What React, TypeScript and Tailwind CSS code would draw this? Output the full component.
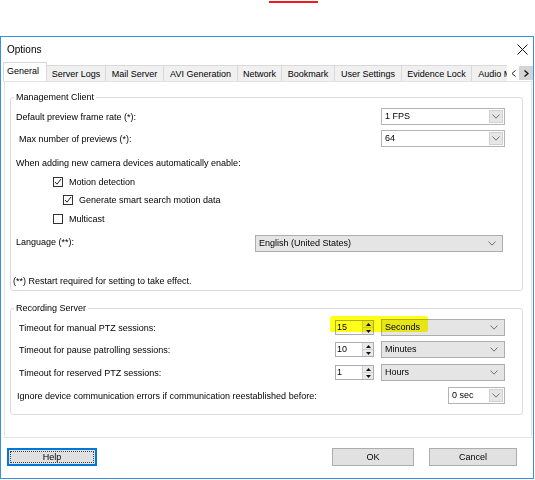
import React from "react";

const Chevron = () => (
  <svg width="8" height="5" viewBox="0 0 8 5" className="block">
    <polyline points="0.5,0.5 4,4.2 7.5,0.5" fill="none" stroke="#707070" strokeWidth="1" />
  </svg>
);

function WhiteSelect({ value, className }: { value: string; className: string }) {
  return (
    <div className={`flex h-[17px] border border-[#b4b4b4] bg-white ${className}`}>
      <span className="flex-1 pl-[3px] leading-[15px]">{value}</span>
      <div className="m-[1px] flex w-[14px] items-center justify-center border border-[#cfcfcf] bg-[#e6e6e6]">
        <Chevron />
      </div>
    </div>
  );
}

function GraySelect({ value, className }: { value: string; className: string }) {
  return (
    <div className={`flex h-[17px] items-center justify-between border border-[#adadad] bg-[#e5e5e5] pl-[3px] pr-[6px] ${className}`}>
      <span className="leading-[15px]">{value}</span>
      <Chevron />
    </div>
  );
}

function Spinner({ value }: { value: string }) {
  return (
    <div className="flex h-[15px] w-[39px] border border-[#abadb3] bg-white">
      <span className="flex-1 pl-[1px] leading-[13px]">{value}</span>
      <div className="flex w-[11px] flex-col border-l border-[#d0d0d0] bg-[#eaeaea]">
        <div className="flex flex-1 items-center justify-center border-b border-[#cfcfcf]">
          <svg width="5" height="3" viewBox="0 0 5 3"><polygon points="0,3 5,3 2.5,0" fill="#111" /></svg>
        </div>
        <div className="flex flex-1 items-center justify-center">
          <svg width="5" height="3" viewBox="0 0 5 3"><polygon points="0,0 5,0 2.5,3" fill="#111" /></svg>
        </div>
      </div>
    </div>
  );
}

function Check({ checked }: { checked: boolean }) {
  return (
    <div className="flex h-[10px] w-[10px] items-center justify-center border border-[#333] bg-white">
      {checked && (
        <svg width="8" height="8" viewBox="0 0 8 8">
          <polyline points="1,4 3,6.2 7,1" fill="none" stroke="#222" strokeWidth="1" />
        </svg>
      )}
    </div>
  );
}

const tabs: { label: string; w: string }[] = [
  { label: "Server Logs", w: "w-[59px]" },
  { label: "Mail Server", w: "w-[58px]" },
  { label: "AVI Generation", w: "w-[74px]" },
  { label: "Network", w: "w-[44px]" },
  { label: "Bookmark", w: "w-[53px]" },
  { label: "User Settings", w: "w-[67px]" },
  { label: "Evidence Lock", w: "w-[70px]" },
  { label: "Audio Messages", w: "w-[80px]" },
];

function SpinRow({ label, value, unit }: { label: string; value: string; unit: string }) {
  return (
    <div className="flex h-[17px] items-center justify-between pr-[12px]">
      <span className="pl-[3px]">{label}</span>
      <div className="flex items-center gap-[7px]">
        <Spinner value={value} />
        <GraySelect value={unit} className="w-[124px]" />
      </div>
    </div>
  );
}

export default function App() {
  return (
    <div className="relative h-[480px] w-[535px] overflow-hidden bg-white font-['Liberation_Sans',Arial,sans-serif] text-[9px] leading-[12px] text-black">
      <div className="h-[35px]">
        <div className="ml-[269px] mt-[1px] h-[2px] w-[49px] bg-[#ec1c24]" />
      </div>
      <div className="flex h-[443px] w-[534px] flex-col border border-[#3c8ee3] bg-white">
        {/* title bar */}
        <div className="flex h-[25px] items-center justify-between pl-[6px] pr-[5px]">
          <span className="text-[10px]">Options</span>
          <svg width="11" height="11" viewBox="0 0 11 11">
            <path d="M0.5 0.5 L10.5 10.5 M10.5 0.5 L0.5 10.5" stroke="#111" strokeWidth="1" />
          </svg>
        </div>
        {/* tab strip */}
        <div className="relative z-10 flex h-[19px] items-end">
          <div className="ml-[2px] flex w-[504px] items-end overflow-hidden">
            <div className="mb-[-1px] h-[20px] w-[44px] shrink-0 border-x border-t border-[#d9d9d9] bg-white pl-[3px] leading-[17px]">
              General
            </div>
            {tabs.map((t) => (
              <div
                key={t.label}
                className={`flex h-[16px] shrink-0 items-center justify-center whitespace-nowrap border-r border-t border-[#d9d9d9] bg-[#f0f0f0] ${t.w}`}
              >
                {t.label}
              </div>
            ))}
          </div>
          <div className="flex h-[16px] items-center">
            <div className="flex h-[14px] w-[12px] items-center justify-center">
              <svg width="5" height="7" viewBox="0 0 5 7"><polyline points="4.5,0.5 1,3.5 4.5,6.5" fill="none" stroke="#222" strokeWidth="1" /></svg>
            </div>
            <div className="flex h-[14px] w-[14px] items-center justify-center bg-[#d4d4d4]">
              <svg width="5" height="7" viewBox="0 0 5 7"><polyline points="0.5,0.5 4,3.5 0.5,6.5" fill="none" stroke="#111" strokeWidth="1.3" /></svg>
            </div>
          </div>
        </div>
        {/* tab panel */}
        <div className="ml-[3px] h-[357px] w-[528px] border border-[#e3e3e3] bg-white">
          <fieldset className="ml-[5px] mt-[9px] w-[513px] rounded-[3px] border border-[#dcdcdc] px-[5px] pb-[3px]">
            <legend className="ml-[-2px] px-[2px] leading-[12px]">Management Client</legend>
            <div className="mt-[5px] flex h-[17px] items-center justify-between pr-[12px]">
              <span>Default preview frame rate (*):</span>
              <WhiteSelect value="1 FPS" className="w-[124px]" />
            </div>
            <div className="mt-[5px] flex h-[17px] items-center justify-between pr-[12px]">
              <span className="pl-[3px]">Max number of previews (*):</span>
              <WhiteSelect value="64" className="w-[124px]" />
            </div>
            <div className="mt-[10px] h-[12px]">When adding new camera devices automatically enable:</div>
            <div className="ml-[37px] mt-[7px] flex h-[12px] items-center gap-[6px]">
              <Check checked />
              <span>Motion detection</span>
            </div>
            <div className="ml-[47px] mt-[6px] flex h-[12px] items-center gap-[6px]">
              <Check checked />
              <span>Generate smart search motion data</span>
            </div>
            <div className="ml-[37px] mt-[7px] flex h-[12px] items-center gap-[6px]">
              <Check checked={false} />
              <span>Multicast</span>
            </div>
            <div className="mt-[10px] flex h-[17px] items-center justify-between pr-[14px]">
              <span className="mb-[4px]">Language (**):</span>
              <GraySelect value="English (United States)" className="w-[248px]" />
            </div>
            <div className="mt-[23px] h-[12px] ml-[-3px]">(**) Restart required for setting to take effect.</div>
          </fieldset>

          <fieldset className="ml-[5px] mt-[11px] w-[513px] rounded-[3px] border border-[#dcdcdc] px-[5px] pb-[10px]">
            <legend className="ml-[-2px] px-[2px] leading-[12px]">Recording Server</legend>
            <div className="mt-[5px]">
              <SpinRow label="Timeout for manual PTZ sessions:" value="15" unit="Seconds" />
            </div>
            <div className="mt-[5px]">
              <SpinRow label="Timeout for pause patrolling sessions:" value="10" unit="Minutes" />
            </div>
            <div className="mt-[6px]">
              <SpinRow label="Timeout for reserved PTZ sessions:" value="1" unit="Hours" />
            </div>
            <div className="mt-[6px] flex h-[17px] items-center justify-between pr-[12px]">
              <span className="pl-[1px]">Ignore device communication errors if communication reestablished before:</span>
              <WhiteSelect value="0 sec" className="w-[57px]" />
            </div>
          </fieldset>
        </div>
        {/* footer */}
        <div className="mt-[10px] flex items-center pr-[16px]">
          <div className="ml-[6px] flex h-[18px] w-[90px] items-center justify-center border-2 border-[#0078d7] bg-[#e1e1e1] p-[1px]">
            <div className="flex h-full w-full items-center justify-center border border-dotted border-[#444]">Help</div>
          </div>
          <div className="ml-auto flex h-[18px] w-[82px] items-center justify-center border border-[#adadad] bg-[#e1e1e1]">OK</div>
          <div className="ml-[15px] flex h-[18px] w-[88px] items-center justify-center border border-[#adadad] bg-[#e1e1e1]">Cancel</div>
        </div>
      </div>
      {/* highlighter mark */}
      <div className="pointer-events-none absolute left-[330px] top-[316px] h-[16px] w-[98px] rounded-[2px] bg-[#ffff00] opacity-90 mix-blend-multiply blur-[0.4px]" />
    </div>
  );
}
